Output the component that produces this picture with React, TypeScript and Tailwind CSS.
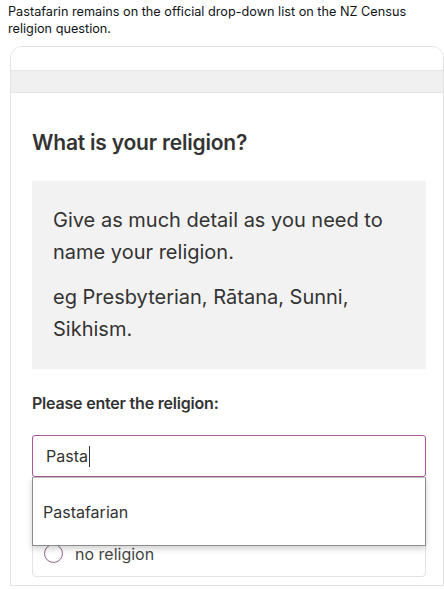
export default function App() {
  return (
    <div className="w-[444px] h-[589px] overflow-hidden bg-white" style={{ fontFamily: 'Inter, "Noto Sans", sans-serif' }}>
      {/* Caption */}
      <p className="px-2 pt-[3px] text-[12.7px] leading-[17px] text-[#0f1419]">
        Pastafarin remains on the official drop-down list on the NZ Census religion question.
      </p>

      {/* Screenshot card */}
      <div className="ml-[10px] mt-[9px] w-[434px] h-[540px] border border-[#e2e2e2] rounded-t-[12px] overflow-hidden">
        <div className="h-[23px] bg-white" />
        <div className="h-[23px] bg-[#f0f0f0] border-y border-[#e4e4e4]" />

        <div className="pl-[21px] pr-[17px] pt-[36px]">
          <h2 className="text-[21px] leading-[28px] font-semibold text-[#333333] tracking-[-0.2px]">What is your religion?</h2>

          <div className="mt-[24px] bg-[#f2f2f2] px-[21px] pt-[23px] pb-[24px] text-[20px] leading-[32px] text-[#333333]">
            <p>Give as much detail as you need to name your religion.</p>
            <p className="mt-[13px] pr-[40px]">eg Presbyterian, Rātana, Sunni, Sikhism.</p>
          </div>

          <p className="mt-[24px] text-[16px] leading-[20px] font-semibold text-[#333333] tracking-[-0.2px]">Please enter the religion:</p>

          <div className="relative mt-[22px]">
            <div className="h-[42px] border border-[#a8559a] rounded-[3px] flex items-center pl-[13px] text-[16px] text-[#333333]">
              Pasta<span className="inline-block w-[1.5px] h-[21px] bg-[#333333] ml-[1px]" />
            </div>

            <div className="mt-[53px] h-[47px] border border-[#e3e3e3] rounded-[4px] flex items-center pl-[11px] gap-[12px] text-[16px] text-[#444444]">
              <span className="w-[19px] h-[19px] rounded-full border-[1.5px] border-[#8a6585] bg-white" />
              <span>no religion</span>
            </div>

            {/* Dropdown menu */}
            <div className="absolute left-0 right-0 top-[42px] h-[69px] bg-white border border-[#8c8c8c] border-t-[#bdbdbd] shadow-[0_3px_6px_rgba(0,0,0,0.18)] flex items-center pl-[10px] text-[16px] text-[#333333]">
              Pastafarian
            </div>
          </div>
        </div>
      </div>
    </div>
  );
}
